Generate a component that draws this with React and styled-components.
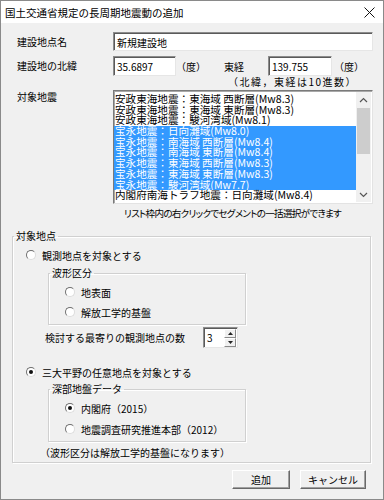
import React from 'react'
import styled, { createGlobalStyle } from 'styled-components'

const quakes = [
  { name: '安政東海地震：東海域 西断層(Mw8.3)', selected: false },
  { name: '安政東海地震：東海域 東断層(Mw8.3)', selected: false },
  { name: '安政東海地震：駿河湾域(Mw8.1)', selected: false },
  { name: '宝永地震：日向灘域(Mw8.0)', selected: true },
  { name: '宝永地震：南海域 西断層(Mw8.4)', selected: true },
  { name: '宝永地震：南海域 東断層(Mw8.4)', selected: true },
  { name: '宝永地震：東海域 西断層(Mw8.3)', selected: true },
  { name: '宝永地震：東海域 東断層(Mw8.3)', selected: true },
  { name: '宝永地震：駿河湾域(Mw7.7)', selected: true },
  { name: '内閣府南海トラフ地震：日向灘域(Mw8.4)', selected: false },
]

const GlobalStyle = createGlobalStyle`
  html, body {
    margin: 0;
    padding: 0;
    background: #fff;
  }
  body {
    font-family: "Noto Sans CJK JP", "Noto Sans", sans-serif;
    font-size: 10px;
    color: #000;
  }
`

const Radio = ({ checked }) => (
  <RadioCircle>{checked && <RadioDot />}</RadioCircle>
)

const App = () => {
  return (
    <>
      <GlobalStyle />
      <Window>
        <TitleBar>
          <span>国土交通省規定の長周期地震動の追加</span>
          <svg width="11" height="11" viewBox="0 0 11 11">
            <path d="M0.5 0.5 L10.5 10.5 M10.5 0.5 L0.5 10.5" stroke="#111" strokeWidth="1" />
          </svg>
        </TitleBar>

        <Body>
          <FormRow $top={9} $height={19}>
            <Label>建設地点名</Label>
            <TextInput $width={260}>新規建設地</TextInput>
          </FormRow>

          <FormRow $top={5} $height={20}>
            <Label>建設地の北緯</Label>
            <TextInput $width={63}>35.6897</TextInput>
            <Unit>（度）</Unit>
            <InlineLabel>東経</InlineLabel>
            <TextInput $width={64}>139.755</TextInput>
            <Unit $pad={2}>（度）</Unit>
          </FormRow>

          <Note>（北緯，東経は10進数）</Note>

          <ListRow>
            <Label $alignTop>対象地震</Label>
            <ListBox>
              <ListItems>
                {quakes.map((q) => (
                  <ListItem key={q.name} $selected={q.selected}>
                    {q.name}
                  </ListItem>
                ))}
              </ListItems>
              <ScrollBar>
                <ScrollArrow>
                  <svg width="9" height="6" viewBox="0 0 9 6">
                    <path d="M1 5 L4.5 1.5 L8 5" stroke="#555" strokeWidth="1.2" fill="none" />
                  </svg>
                </ScrollArrow>
                <ScrollTrack>
                  <ScrollThumb />
                </ScrollTrack>
                <ScrollArrow>
                  <svg width="9" height="6" viewBox="0 0 9 6">
                    <path d="M1 1 L4.5 4.5 L8 1" stroke="#555" strokeWidth="1.2" fill="none" />
                  </svg>
                </ScrollArrow>
              </ScrollBar>
            </ListBox>
          </ListRow>

          <Hint>リスト枠内の右クリックでセグメントの一括選択ができます</Hint>

          <Group>
            <GroupLegend>対象地点</GroupLegend>
            <GroupInner>
              <RadioRow $top={6}>
                <Radio />
                <span>観測地点を対象とする</span>
              </RadioRow>

              <SubGroup $top={5}>
                <GroupLegend>波形区分</GroupLegend>
                <SubInner>
                  <RadioRow $top={6}>
                    <Radio />
                    <span>地表面</span>
                  </RadioRow>
                  <RadioRow $top={6}>
                    <Radio />
                    <span>解放工学的基盤</span>
                  </RadioRow>
                </SubInner>
              </SubGroup>

              <SpinRow>
                <SpinLabel>検討する最寄りの観測地点の数</SpinLabel>
                <Spinner>
                  <SpinValue>3</SpinValue>
                  <SpinButtons>
                    <SpinButton>
                      <svg width="5" height="3" viewBox="0 0 5 3">
                        <path d="M0 3 L2.5 0 L5 3 Z" fill="#222" />
                      </svg>
                    </SpinButton>
                    <SpinButton>
                      <svg width="5" height="3" viewBox="0 0 5 3">
                        <path d="M0 0 L2.5 3 L5 0 Z" fill="#222" />
                      </svg>
                    </SpinButton>
                  </SpinButtons>
                </Spinner>
              </SpinRow>

              <RadioRow $top={17}>
                <Radio checked />
                <span>三大平野の任意地点を対象とする</span>
              </RadioRow>

              <SubGroup $top={4}>
                <GroupLegend>深部地盤データ</GroupLegend>
                <SubInner>
                  <RadioRow $top={6}>
                    <Radio checked />
                    <span>内閣府（2015）</span>
                  </RadioRow>
                  <RadioRow $top={7}>
                    <Radio />
                    <span>地震調査研究推進本部（2012）</span>
                  </RadioRow>
                </SubInner>
              </SubGroup>

              <GroupNote>（波形区分は解放工学的基盤になります）</GroupNote>
            </GroupInner>
          </Group>

          <ButtonBar>
            <Button $width={58}>追加</Button>
            <Button $width={66}>キャンセル</Button>
          </ButtonBar>
        </Body>
      </Window>
    </>
  )
}

export default App

const Window = styled.div`
  width: 384px;
  height: 500px;
  box-sizing: border-box;
  border: 1px solid #8a8a8a;
  background: #f0f0f0;
  display: flex;
  flex-direction: column;
`

const TitleBar = styled.div`
  height: 22px;
  background: #fff;
  display: flex;
  align-items: center;
  justify-content: space-between;
  padding: 0 8px 0 4px;
  font-size: 10.5px;
  flex-shrink: 0;
`

const Body = styled.div`
  flex: 1;
  display: flex;
  flex-direction: column;
  padding: 0 10px 0 11px;
`

const FormRow = styled.div`
  display: flex;
  align-items: center;
  height: ${(p) => p.$height}px;
  margin-top: ${(p) => p.$top}px;
  padding-left: 5px;
`

const Label = styled.div`
  width: 96px;
  flex-shrink: 0;
  align-self: ${(p) => (p.$alignTop ? 'flex-start' : 'center')};
  margin-top: ${(p) => (p.$alignTop ? '1px' : '0')};
  line-height: 12px;
`

const TextInput = styled.div`
  box-sizing: border-box;
  width: ${(p) => p.$width}px;
  height: 100%;
  background: #fff;
  border: 1px solid;
  border-color: #8c8c8c #e6e6e6 #e6e6e6 #8c8c8c;
  box-shadow: inset 1px 1px 0 #5a5a5a;
  padding: 1px 3px 0;
  display: flex;
  align-items: center;
  font-size: 10px;
`

const Unit = styled.span`
  margin-left: ${(p) => p.$pad || 0}px;
  width: 36px;
`

const InlineLabel = styled.span`
  width: 56px;
  padding-left: 12px;
  box-sizing: border-box;
`

const Note = styled.div`
  height: 11px;
  line-height: 11px;
  text-align: right;
  padding-right: 16px;
  letter-spacing: 1.5px;
  white-space: nowrap;
`

const ListRow = styled.div`
  display: flex;
  margin-top: 3px;
  padding-left: 5px;
`

const ListBox = styled.div`
  box-sizing: border-box;
  width: 260px;
  height: 114px;
  background: #fff;
  border: 1px solid;
  border-color: #7a7a7a #e3e3e3 #e3e3e3 #7a7a7a;
  box-shadow: inset 1px 1px 0 #a8a8a8;
  display: flex;
  overflow: hidden;
`

const ListItems = styled.div`
  flex: 1;
  padding-top: 3px;
  overflow: hidden;
`

const ListItem = styled.div`
  height: 10.7px;
  line-height: 10.7px;
  padding-left: 1px;
  white-space: nowrap;
  font-size: 10.6px;
  background: ${(p) => (p.$selected ? '#3399ff' : 'transparent')};
  color: ${(p) => (p.$selected ? '#fff' : '#000')};
`

const ScrollBar = styled.div`
  width: 15px;
  display: flex;
  flex-direction: column;
  background: #f0f0f0;
  margin: 1px 1px 1px 0;
`

const ScrollArrow = styled.div`
  height: 15px;
  display: flex;
  align-items: center;
  justify-content: center;
`

const ScrollTrack = styled.div`
  flex: 1;
  padding: 1px 1px;
`

const ScrollThumb = styled.div`
  height: 46px;
  background: #cdcdcd;
`

const Hint = styled.div`
  height: 12px;
  line-height: 12px;
  margin-top: 3px;
  margin-left: 112px;
  white-space: nowrap;
  font-size: 9.6px;
  letter-spacing: -0.75px;
  font-feature-settings: "palt";
`

const Group = styled.fieldset`
  margin: 11px 2px 0 0;
  padding: 0;
  border: 1px solid #d0d0d0;
  box-shadow: 1px 1px 0 #fff, inset 1px 1px 0 #fff;
  min-width: 0;
`

const GroupLegend = styled.legend`
  padding: 0 2px;
  margin-left: 1px;
  height: 12px;
  line-height: 12px;
`

const GroupInner = styled.div`
  padding: 0 0 3px 13px;
  display: flex;
  flex-direction: column;
`

const SubGroup = styled.fieldset`
  margin: ${(p) => p.$top}px 0 0 22px;
  padding: 0;
  width: 198px;
  box-sizing: border-box;
  border: 1px solid #d0d0d0;
  box-shadow: 1px 1px 0 #fff, inset 1px 1px 0 #fff;
  min-width: 0;
`

const SubInner = styled.div`
  padding: 0 0 5px 16px;
  display: flex;
  flex-direction: column;
`

const RadioRow = styled.div`
  display: flex;
  align-items: center;
  gap: 6px;
  height: 14px;
  margin-top: ${(p) => p.$top}px;
`

const RadioCircle = styled.span`
  box-sizing: border-box;
  width: 10px;
  height: 10px;
  border-radius: 50%;
  background: #fff;
  border: 1px solid;
  border-color: #6e6e6e #dcdcdc #dcdcdc #6e6e6e;
  display: flex;
  align-items: center;
  justify-content: center;
  flex-shrink: 0;
`

const RadioDot = styled.span`
  width: 4px;
  height: 4px;
  border-radius: 50%;
  background: #111;
`

const SpinRow = styled.div`
  display: flex;
  align-items: center;
  height: 21px;
  margin-top: 2px;
  padding-left: 19px;
`

const SpinLabel = styled.span`
  width: 158px;
  white-space: nowrap;
`

const Spinner = styled.div`
  box-sizing: border-box;
  width: 35px;
  height: 21px;
  display: flex;
  background: #fff;
  border: 1px solid;
  border-color: #8c8c8c #e6e6e6 #e6e6e6 #8c8c8c;
  box-shadow: inset 1px 1px 0 #5a5a5a;
`

const SpinValue = styled.span`
  flex: 1;
  padding: 2px 0 0 3px;
  font-size: 10px;
`

const SpinButtons = styled.div`
  width: 12px;
  display: flex;
  flex-direction: column;
  margin: 1px 1px 0 0;
`

const SpinButton = styled.div`
  flex: 1;
  box-sizing: border-box;
  background: #f0f0f0;
  border: 1px solid;
  border-color: #fff #8a8a8a #8a8a8a #fff;
  display: flex;
  align-items: center;
  justify-content: center;
`

const GroupNote = styled.div`
  height: 12px;
  line-height: 12px;
  margin: 5px 0 0 14px;
`

const ButtonBar = styled.div`
  display: flex;
  justify-content: flex-end;
  gap: 10px;
  margin: 7px 7px 0 0;
`

const Button = styled.div`
  box-sizing: border-box;
  width: ${(p) => p.$width}px;
  height: 19px;
  background: #f0f0f0;
  border: 1px solid;
  border-color: #fff #696969 #696969 #fff;
  box-shadow: inset -1px -1px 0 #a0a0a0;
  display: flex;
  align-items: center;
  justify-content: center;
  font-size: 10px;
`
